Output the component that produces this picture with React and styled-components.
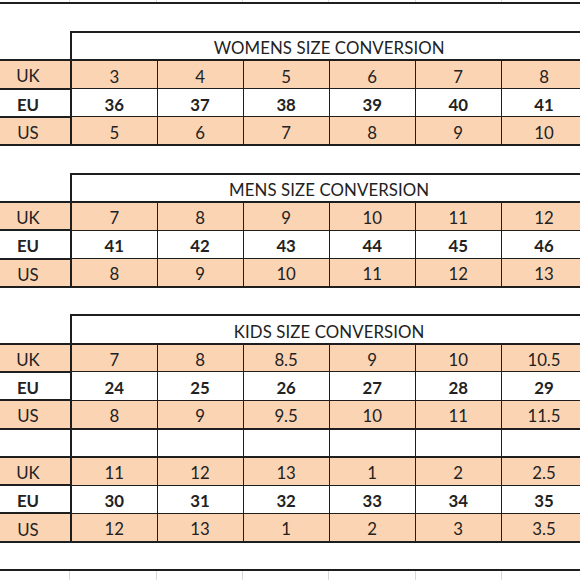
import styled, { createGlobalStyle } from "styled-components";

const GlobalStyle = createGlobalStyle`
  html, body {
    margin: 0;
    padding: 0;
    background: #fff;
  }
  body {
    font-family: Lato, "Liberation Sans", sans-serif;
    color: #222;
  }
`;

const COL = 86.33;
const PEACH = "#fbd4b4";

const Sheet = styled.div`
  width: 580px;
  height: 580px;
  overflow: hidden;
  display: flex;
  flex-direction: column;
`;

const GridStrip = styled.div`
  display: grid;
  grid-template-columns: repeat(7, ${COL}px);
  margin-left: -16px;
  height: ${(p) => p.$h}px;
  flex: none;
  & > div {
    border-right: 1px solid #d9d9d9;
  }
`;

const Rule = styled.div`
  height: 2px;
  background: #1e1e1e;
  flex: none;
`;

const Spacer = styled.div`
  height: ${(p) => p.$h}px;
  flex: none;
`;

const Table = styled.table`
  border-collapse: collapse;
  table-layout: fixed;
  width: ${COL * 7}px;
  margin-left: -16px;
  margin-top: ${(p) => p.$gap}px;
  flex: none;
  font-size: 16.8px;
  td {
    height: 28.3px;
    padding: 3px 0 0;
    box-sizing: border-box;
    text-align: center;
    vertical-align: middle;
    white-space: nowrap;
  }
`;

const Corner = styled.td`
  border: none;
`;

const Title = styled.td`
  border: 2px solid #1e1e1e;
  background: #fff;
  letter-spacing: 0.1px;
`;

const Group = styled.tbody`
  & > tr:first-child > td {
    border-top: 2px solid #1e1e1e;
  }
  & > tr:last-child > td {
    border-bottom: 2px solid #1e1e1e;
  }
`;

const Row = styled.tr`
  background: ${(p) => (p.$fill ? PEACH : "#fff")};
  font-weight: ${(p) => (p.$bold ? 700 : 400)};
`;

const Label = styled.td`
  border: 2px solid #1e1e1e;
`;

const Cell = styled.td`
  border: 1px solid #1e1e1e;
  &:last-child {
    border-right-width: 2px;
  }
`;

const Gap = styled.tbody`
  & td {
    border-top: 2px solid #1e1e1e;
    border-bottom: 2px solid #1e1e1e;
  }
`;

const charts = [
  {
    title: "WOMENS SIZE CONVERSION",
    groups: [
      {
        uk: ["3", "4", "5", "6", "7", "8"],
        eu: ["36", "37", "38", "39", "40", "41"],
        us: ["5", "6", "7", "8", "9", "10"],
      },
    ],
  },
  {
    title: "MENS SIZE CONVERSION",
    groups: [
      {
        uk: ["7", "8", "9", "10", "11", "12"],
        eu: ["41", "42", "43", "44", "45", "46"],
        us: ["8", "9", "10", "11", "12", "13"],
      },
    ],
  },
  {
    title: "KIDS SIZE CONVERSION",
    groups: [
      {
        uk: ["7", "8", "8.5", "9", "10", "10.5"],
        eu: ["24", "25", "26", "27", "28", "29"],
        us: ["8", "9", "9.5", "10", "11", "11.5"],
      },
      {
        uk: ["11", "12", "13", "1", "2", "2.5"],
        eu: ["30", "31", "32", "33", "34", "35"],
        us: ["12", "13", "1", "2", "3", "3.5"],
      },
    ],
  },
];

function SizeRow({ label, values, fill, bold }) {
  return (
    <Row $fill={fill} $bold={bold}>
      <Label>{label}</Label>
      {values.map((v, i) => (
        <Cell key={i}>{v}</Cell>
      ))}
    </Row>
  );
}

function Chart({ chart, gap }) {
  return (
    <Table $gap={gap}>
      <thead>
        <tr>
          <Corner />
          <Title colSpan={6}>{chart.title}</Title>
        </tr>
      </thead>
      {chart.groups.map((g, i) => [
        i > 0 && (
          <Gap key={"gap" + i}>
            <tr>
              <Label />
              {g.uk.map((_, j) => (
                <Cell key={j} />
              ))}
            </tr>
          </Gap>
        ),
        <Group key={"group" + i}>
          <SizeRow label="UK" values={g.uk} fill />
          <SizeRow label="EU" values={g.eu} bold />
          <SizeRow label="US" values={g.us} fill />
        </Group>,
      ])}
    </Table>
  );
}

function Gridlines({ h }) {
  return (
    <GridStrip $h={h}>
      {Array.from({ length: 7 }).map((_, i) => (
        <div key={i} />
      ))}
    </GridStrip>
  );
}

export default function App() {
  return (
    <>
      <GlobalStyle />
      <Sheet>
        <Gridlines h={2} />
        <Rule />
        {charts.map((c, i) => (
          <Chart key={c.title} chart={c} gap={i === 0 ? 27 : 26.5} />
        ))}
        <Spacer $h={26} />
        <Rule />
        <Gridlines h={10} />
      </Sheet>
    </>
  );
}
